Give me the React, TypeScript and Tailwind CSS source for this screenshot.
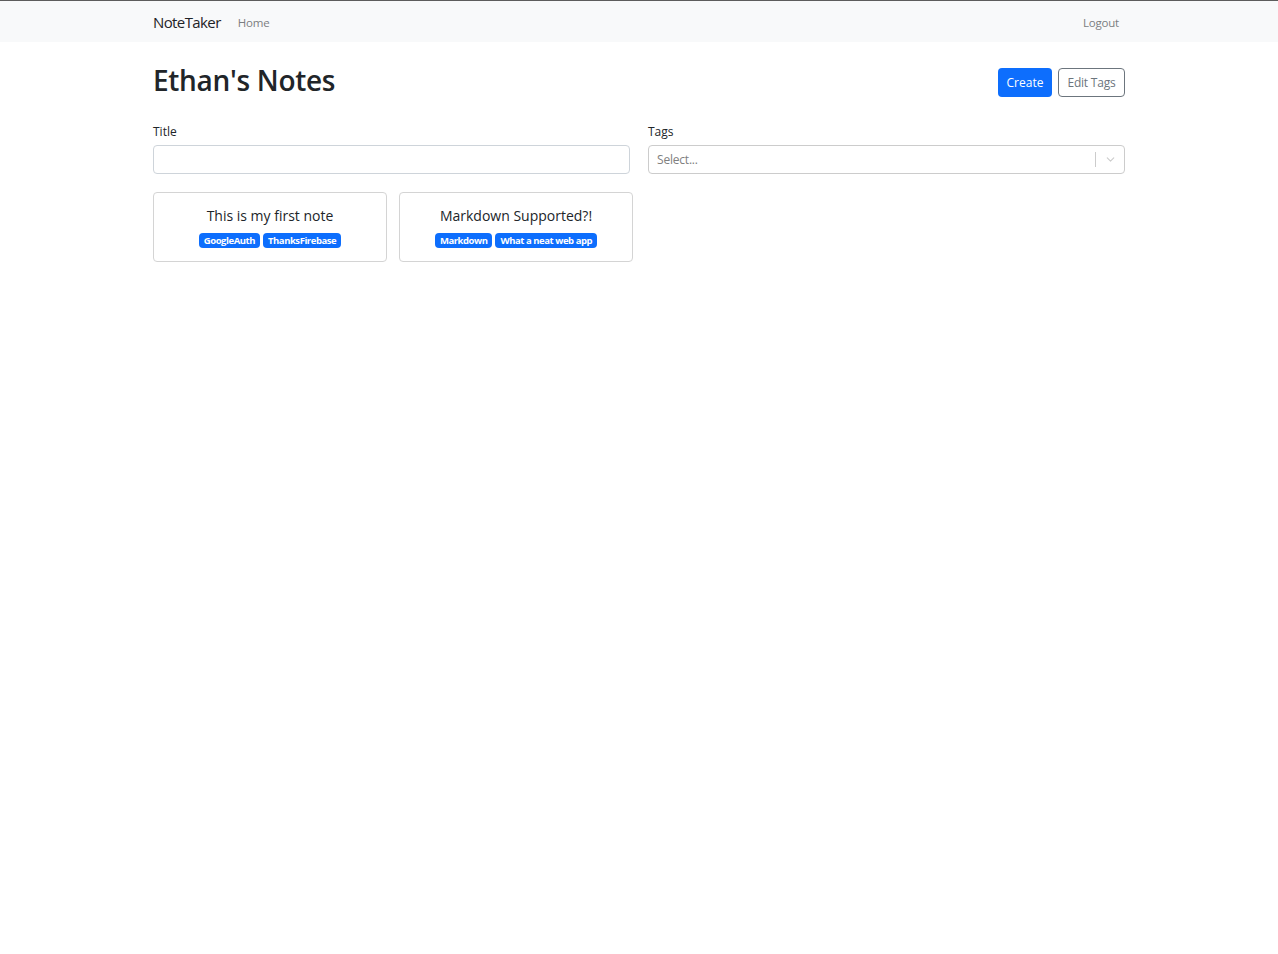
import { ChevronDown } from "lucide-react";

const notes = [
  { title: "This is my first note", tags: ["GoogleAuth", "ThanksFirebase"] },
  { title: "Markdown Supported?!", tags: ["Markdown", "What a neat web app"] },
];

export default function App() {
  return (
    <div
      className="min-h-screen bg-white text-[#212529]"
      style={{ fontFamily: '"Open Sans", "Noto Sans", sans-serif' }}
    >
      {/* Navbar */}
      <nav className="border-t border-[#5c5c5c] bg-[#f8f9fa]">
        <div className="mx-auto flex h-[41px] w-[972px] items-center justify-between pt-[2px]">
          <div className="flex items-center gap-[17px]">
            <span className="text-[15px] tracking-[-0.6px] text-[#1f2327]">NoteTaker</span>
            <a className="text-[11.5px] tracking-[-0.2px] text-[#7b7e81]">Home</a>
          </div>
          <a className="mr-[6px] text-[11.5px] tracking-[-0.2px] text-[#7b7e81]">Logout</a>
        </div>
      </nav>

      <main className="mx-auto w-[972px]">
        {/* Header */}
        <div className="mt-[26px] flex h-[29px] items-start justify-between">
          <h1 className="-mt-[3px] text-[28px] font-semibold leading-[30px] tracking-[-0.3px] text-[#212529]">
            Ethan's Notes
          </h1>
          <div className="flex gap-[6px]">
            <button className="h-[29px] w-[54px] rounded-[4px] bg-[#0d6efd] text-[12px] text-white">
              Create
            </button>
            <button className="h-[29px] w-[67px] rounded-[4px] border border-[#6c757d] text-[12px] tracking-[-0.2px] text-[#6c757d]">
              Edit Tags
            </button>
          </div>
        </div>

        {/* Filters */}
        <div className="mt-[26px] grid grid-cols-2 gap-[18px]">
          <div className="flex flex-col">
            <label className="text-[12px] leading-[18px]">Title</label>
            <input className="mt-[4px] h-[29px] rounded-[4px] border border-[#ced4da] px-2 text-[12px] outline-none" />
          </div>
          <div className="flex flex-col">
            <label className="text-[12px] leading-[18px]">Tags</label>
            <div className="mt-[4px] flex h-[29px] items-center rounded-[4px] border border-[#cccccc] bg-white">
              <span className="flex-1 pl-[8px] text-[12px] tracking-[-0.2px] text-[#808080]">Select...</span>
              <span className="h-[15px] w-px bg-[#cccccc]" />
              <span className="flex w-[28px] justify-center text-[#cccccc]">
                <ChevronDown size={13} strokeWidth={2} />
              </span>
            </div>
          </div>
        </div>

        {/* Notes */}
        <div className="mt-[18px] grid grid-cols-4 gap-[12px]">
          {notes.map((n) => (
            <div
              key={n.title}
              className="flex h-[70px] flex-col items-center justify-center rounded-[4px] border border-[#d4d4d4]"
            >
              <div className="text-[14px] leading-[20px] text-[#212529]">{n.title}</div>
              <div className="mt-[7px] flex gap-[3px]">
                {n.tags.map((t) => (
                  <span
                    key={t}
                    className="rounded-[4px] bg-[#0d6efd] px-[5px] text-[9.5px] font-bold leading-[15px] tracking-[-0.45px] text-white"
                  >
                    {t}
                  </span>
                ))}
              </div>
            </div>
          ))}
        </div>
      </main>
    </div>
  );
}
